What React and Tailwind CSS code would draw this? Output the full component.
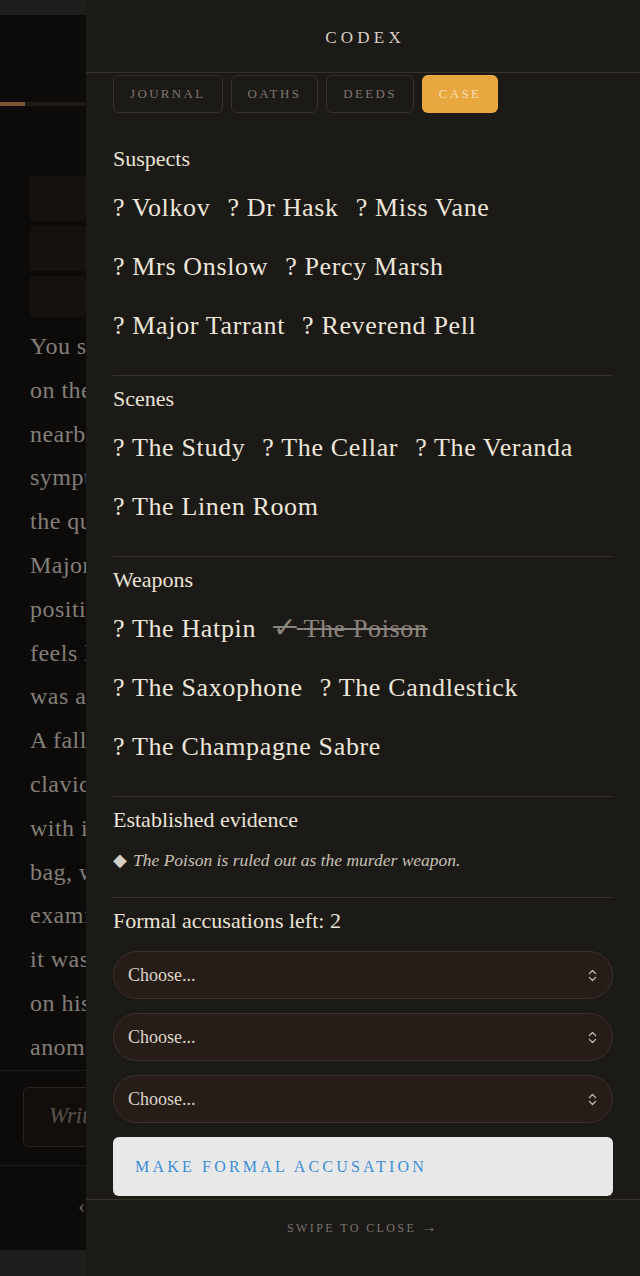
import React from "react";
import { ChevronsUpDown } from "lucide-react";

const bgLines = [
  "You step into the study and",
  "on the desk a glass sits",
  "nearby, half drained, its",
  "symptoms plain enough to",
  "the quiet physician who",
  "Major Tarrant declines to",
  "position himself nearer. It",
  "feels like a stage, as if it",
  "was arranged for an audience.",
  "A fall has bruised the left",
  "clavicle; the body lies",
  "with its hand upon a doctor's",
  "bag, which Dr Hask begs to",
  "examine. On closer inspection",
  "it was never opened at all;",
  "on his cuff a faint residue,",
  "anomalous and unexplained.",
];

function Section({ title, rows, first }) {
  return (
    <div className={first ? "pt-[32px] pb-[20px]" : "border-t border-[#3a302c] pt-[9px] pb-[20px]"}>
      <div className="text-[22px] leading-[28px] text-[#ebe3d6]">{title}</div>
      <div className="mt-[5px] flex flex-col">
        {rows.map((row, i) => (
          <div key={i} className="flex h-[59px] items-center gap-x-[17px]">
            {row.map((it) =>
              it.done ? (
                <span key={it.name} className="whitespace-nowrap text-[26px] leading-[59px] tracking-[0.025em] text-[#8b857d] line-through decoration-[#8b857d]">
                  <span className="text-[28px] leading-none">✓</span> {it.name}
                </span>
              ) : (
                <span key={it.name} className="whitespace-nowrap text-[26px] leading-[59px] tracking-[0.025em] text-[#ede6d9]">
                  ? {it.name}
                </span>
              )
            )}
          </div>
        ))}
      </div>
    </div>
  );
}

function Choose() {
  return (
    <div className="flex h-[48px] items-center justify-between rounded-full border border-[#3d302b] bg-[#261d18] pl-[14px] pr-[12px]">
      <span className="text-[18px] text-[#ddd5c8]">Choose...</span>
      <ChevronsUpDown size={15} strokeWidth={2} className="text-[#c9c1b5]" />
    </div>
  );
}

export default function App() {
  return (
    <div className="relative h-[1276px] w-[640px] overflow-hidden bg-[#1f1e1c] font-['Liberation_Serif',serif]">
      {/* underlying page, dimmed */}
      <div className="mt-[15px] flex h-[1235px] flex-col bg-[#0c0b0a]">
        <div className="h-[87px]" />
        <div className="flex h-[4px] bg-[#1d1916]">
          <div className="w-[25px] bg-[#7b552d]" />
        </div>
        <div className="flex flex-col gap-[5px] pl-[30px] pt-[70px]">
          <div className="h-[45px] bg-[#14110f]" />
          <div className="h-[45px] bg-[#14110f]" />
          <div className="h-[41px] bg-[#14110f]" />
        </div>
        <div className="pl-[30px] pt-[8px]">
          {bgLines.map((l) => (
            <div key={l} className="whitespace-nowrap text-[24px] leading-[43.8px] tracking-[0.02em] text-[#837e77]">
              {l}
            </div>
          ))}
        </div>
        <div className="border-t border-[#1e1b19] px-[23px] pt-[16px] pb-[18px]">
          <div className="flex h-[60px] items-center rounded-md border border-[#2a2320] bg-[#110e0c] pl-[25px]">
            <span className="text-[23px] italic text-[#58524c]">Write your theory here...</span>
          </div>
        </div>
        <div className="flex flex-1 items-center border-t border-[#1e1b19] pl-[78px] pb-[4px]">
          <span className="text-[22px] text-[#6b6560]">‹</span>
        </div>
      </div>

      {/* drawer */}
      <div className="absolute right-0 top-0 bottom-0 flex w-[554px] flex-col bg-[#1c1a17]">
        <div className="flex h-[73px] shrink-0 items-center justify-center border-b border-[#3a302c] pt-[3px]">
          <span className="text-[17px] tracking-[0.25em] text-[#d9d1c5] pl-[0.25em]">CODEX</span>
        </div>
        <div className="flex-1 overflow-hidden px-[27px]">
          <div className="mt-[2px] flex gap-[8px]">
            {["JOURNAL", "OATHS", "DEEDS"].map((t) => (
              <div key={t} className="flex h-[38px] items-center rounded-md border border-[#3a2f2b] px-[16px] text-[13px] tracking-[0.18em] text-[#7f7770]">
                {t}
              </div>
            ))}
            <div className="flex h-[38px] items-center rounded-md bg-[#e9a73f] px-[17px] text-[13px] tracking-[0.18em] text-[#f8dfb3]">
              CASE
            </div>
          </div>

          <Section
            first
            title="Suspects"
            rows={[
              [{ name: "Volkov" }, { name: "Dr Hask" }, { name: "Miss Vane" }],
              [{ name: "Mrs Onslow" }, { name: "Percy Marsh" }],
              [{ name: "Major Tarrant" }, { name: "Reverend Pell" }],
            ]}
          />
          <Section
            title="Scenes"
            rows={[
              [{ name: "The Study" }, { name: "The Cellar" }, { name: "The Veranda" }],
              [{ name: "The Linen Room" }],
            ]}
          />
          <Section
            title="Weapons"
            rows={[
              [{ name: "The Hatpin" }, { name: "The Poison", done: true }],
              [{ name: "The Saxophone" }, { name: "The Candlestick" }],
              [{ name: "The Champagne Sabre" }],
            ]}
          />

          <div className="border-t border-[#3a302c] pt-[9px] pb-[25px]">
            <div className="text-[22px] leading-[28px] text-[#ebe3d6]">Established evidence</div>
            <div className="mt-[14px] flex items-center gap-[6px] text-[17.5px] leading-[24px] text-[#c9c1b4]">
              <span className="text-[18px] text-[#d6cfc4]">◆</span>
              <span className="italic">The Poison is ruled out as the murder weapon.</span>
            </div>
          </div>

          <div className="border-t border-[#3a302c] pt-[9px]">
            <div className="text-[22px] leading-[28px] text-[#ebe3d6]">Formal accusations left: 2</div>
            <div className="mt-[16px] flex flex-col gap-[14px]">
              <Choose />
              <Choose />
              <Choose />
              <div className="flex h-[59px] items-center rounded-md bg-[#e8e8e8] pl-[22px]">
                <span className="text-[16px] tracking-[0.2em] text-[#3b8ed8]">MAKE FORMAL ACCUSATION</span>
              </div>
            </div>
          </div>
        </div>
        <div className="flex h-[77px] shrink-0 justify-center border-t border-[#3a302c] pt-[16px]">
          <span className="text-[12px] tracking-[0.2em] text-[#7b756e]">SWIPE TO CLOSE <span className="text-[15px]">→</span></span>
        </div>
      </div>
    </div>
  );
}
